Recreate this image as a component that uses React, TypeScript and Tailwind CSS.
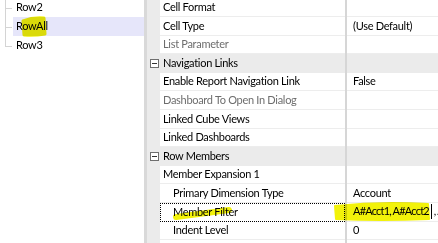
type Row =
  | { kind: 'cat'; label: string }
  | { kind: 'prop'; label: string; value?: string; disabled?: boolean; indent?: boolean; focus?: boolean };

const rows: Row[] = [
  { kind: 'prop', label: 'Cell Format' },
  { kind: 'prop', label: 'Cell Type', value: '(Use Default)' },
  { kind: 'prop', label: 'List Parameter', disabled: true },
  { kind: 'cat', label: 'Navigation Links' },
  { kind: 'prop', label: 'Enable Report Navigation Link', value: 'False' },
  { kind: 'prop', label: 'Dashboard To Open In Dialog', disabled: true },
  { kind: 'prop', label: 'Linked Cube Views' },
  { kind: 'prop', label: 'Linked Dashboards' },
  { kind: 'cat', label: 'Row Members' },
  { kind: 'prop', label: 'Member Expansion 1' },
  { kind: 'prop', label: 'Primary Dimension Type', value: 'Account', indent: true },
  { kind: 'prop', label: 'Member Filter', indent: true, focus: true },
  { kind: 'prop', label: 'Indent Level', value: '0', indent: true },
  { kind: 'prop', label: '' },
];

const treeItems = ['Row2', 'RowAll', 'Row3'];

function CollapseBox() {
  return (
    <div className="w-[9px] h-[9px] border border-[#6e6e6e] bg-white flex items-center justify-center">
      <div className="w-[5px] h-px bg-[#333]" />
    </div>
  );
}

function TreePanel() {
  return (
    <div className="w-[144px] shrink-0 bg-white -mt-[2px]">
      {treeItems.map((item, i) => {
        const last = i === treeItems.length - 1;
        const selected = item === 'RowAll';
        return (
          <div key={item} className="flex h-[19px]">
            <div className="relative w-[13px] shrink-0">
              <div className={`absolute left-[5px] top-0 border-l border-[#d4d4d4] ${last ? 'h-1/2' : 'h-full'}`} />
              <div className="absolute left-[5px] top-1/2 w-[7px] border-t border-[#d4d4d4]" />
            </div>
            <div className={`flex-1 flex items-center pl-[3px] ${selected ? 'bg-[#e6e6fa]' : ''}`}>{item}</div>
          </div>
        );
      })}
    </div>
  );
}

function PropertyRow({ row }: { row: Row }) {
  if (row.kind === 'cat') {
    return (
      <div className="flex shrink-0 h-[18.6px] bg-[#ebebeb]">
        <div className="w-[13px] shrink-0 flex items-center justify-center pl-[2px]">
          <CollapseBox />
        </div>
        <div className="w-[185px] shrink-0 flex items-center pl-[3px] whitespace-nowrap overflow-hidden">{row.label}</div>
        <div className="w-[2px] shrink-0 bg-[#d6d6d6]" />
        <div className="flex-1" />
      </div>
    );
  }
  return (
    <div className="flex shrink-0 h-[18.6px]">
      <div className="w-[13px] shrink-0 bg-[#ebebeb]" />
      <div
        className={`w-[185px] shrink-0 flex items-center whitespace-nowrap overflow-hidden border-b ${
          row.focus ? 'border border-dotted border-black pl-[12px]' : 'border-[#ededed]'
        } ${row.indent && !row.focus ? 'pl-[13px]' : ''} ${!row.indent ? 'pl-[3px]' : ''} ${
          row.disabled ? 'text-[#6d6d6d]' : 'text-black'
        }`}
      >
        {row.label}
      </div>
      <div className="w-[2px] shrink-0 bg-[#d6d6d6]" />
      <div className="flex-1 flex items-center pl-[6px] whitespace-nowrap overflow-hidden border-b border-[#ededed]">
        {row.focus ? (
          <span className="flex items-center tracking-[-0.8px]">
            A#Acct1, A#Acct2
            <span className="inline-block w-px h-[15px] bg-black ml-[2px] mr-[2px]" />
            , A#Acct3
          </span>
        ) : (
          row.value
        )}
      </div>
    </div>
  );
}

export default function App() {
  return (
    <div
      className="relative w-[438px] h-[243px] overflow-hidden bg-white flex text-[11px] tracking-[-0.3px] text-black"
      style={{ fontFamily: 'Lato, "Noto Sans", sans-serif' }}
    >
      <TreePanel />
      <div className="w-[3px] shrink-0 bg-[#d9d9d9]" />
      <div className="flex-1 flex flex-col -mt-[1.6px] bg-white">
        {rows.map((r, i) => (
          <PropertyRow key={i} row={r} />
        ))}
      </div>

      {/* highlighter marks drawn over the screenshot */}
      <svg className="absolute inset-0 pointer-events-none mix-blend-multiply" width="438" height="243">
        <path d="M23 21 Q33 17 44 18 L45 34 Q34 36 24 35 Z" fill="#f2f20a" stroke="#f2f20a" strokeWidth="3" strokeLinejoin="round" />
        <path d="M176 217 L229 210" stroke="#f2f20a" strokeWidth="6" strokeLinecap="round" />
        <path d="M335 206 Q380 201 428 204 L429 219 Q380 221 336 219 Z" fill="#f2f20a" stroke="#f2f20a" strokeWidth="2" strokeLinejoin="round" />
      </svg>
    </div>
  );
}
